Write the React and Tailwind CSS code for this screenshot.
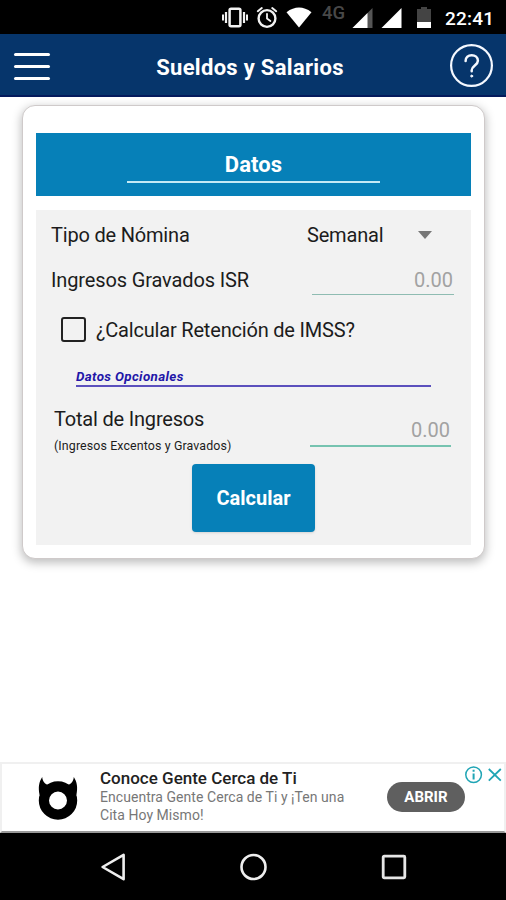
import React, { useState } from "react";

const StatusBar = () => (
  <div className="flex h-[34px] items-center bg-black pl-[221px] text-white">
    <svg className="h-[34px] w-[28px]" viewBox="0 0 28 34" fill="none" stroke="#f2f2f2">
      <rect x="8.6" y="8.8" width="10.8" height="17.4" rx="1.5" strokeWidth="2.5" />
      <path d="M5 12v11M23 12v11" strokeWidth="2.2" />
      <path d="M2 14.5v6M26 14.5v6" strokeWidth="2" />
    </svg>
    <svg className="ml-[7px] h-[34px] w-[22px]" viewBox="0 0 22 34" fill="none" stroke="#f2f2f2" strokeLinecap="round">
      <circle cx="11" cy="18.5" r="8.4" strokeWidth="2.4" />
      <path d="M1.8 11.2l4-3.2M20.2 11.2l-4-3.2" strokeWidth="2" />
      <path d="M11 13.8v4.8l3.4 2.4" strokeWidth="1.8" />
    </svg>
    <svg className="ml-[8px] h-[34px] w-[26px]" viewBox="0 0 26 34" fill="#fff">
      <path d="M0.5 12.2Q13 3 25.5 12.2L13 27.5z" />
    </svg>
    <span className="mb-[8px] ml-[10px] w-[25px] text-[18.5px] leading-none font-medium text-[#484848]">4G</span>
    <svg className="ml-[5px] h-[34px] w-[21px]" viewBox="0 0 21 34">
      <path d="M0.5 28L20.5 8v20z" fill="#555" />
      <path d="M0.5 28L15.5 13v15z" fill="#fff" />
    </svg>
    <svg className="ml-[8px] h-[34px] w-[21px]" viewBox="0 0 21 34" fill="#fff">
      <path d="M0.5 28L20.5 8v20z" />
    </svg>
    <svg className="ml-[15px] h-[34px] w-[14px]" viewBox="0 0 14 34">
      <path d="M0 9h4V7h6v2h4v13H0z" fill="#444" />
      <path d="M0 22h14v6H0z" fill="#fff" />
    </svg>
    <span className="mt-[2px] ml-[14px] text-[19px] leading-none font-medium tracking-[0.2px]">22:41</span>
  </div>
);

const Header = () => (
  <header className="flex h-[63px] items-center border-b-2 border-[#041a5c] bg-[#06356b] pt-[3px] pl-[14px] text-white">
    <button className="flex w-[36px] flex-col gap-[9px]" aria-label="Menú">
      <span className="h-[3px] rounded-full bg-white" />
      <span className="h-[3px] rounded-full bg-white" />
      <span className="h-[3px] rounded-full bg-white" />
    </button>
    <h1 className="mt-[3px] w-[400px] text-center text-[22px] leading-none font-bold tracking-[0.3px] whitespace-nowrap">
      Sueldos y Salarios
    </h1>
    <button aria-label="Ayuda">
      <svg className="h-[44px] w-[44px]" viewBox="0 0 44 44" fill="none" stroke="#f4f8ff" strokeLinecap="round">
        <circle cx="21.5" cy="21.5" r="20.4" strokeWidth="2.2" />
        <path d="M15.6 17c0-3.7 2.7-5.8 6.1-5.8s6.2 2.2 6.2 5.5c0 4.6-6.2 5-6.2 9.6v1" strokeWidth="2.5" />
        <circle cx="21.7" cy="32.1" r="1" fill="#f4f8ff" strokeWidth="1" />
      </svg>
    </button>
  </header>
);

const PayrollForm = () => {
  const [withholdImss, setWithholdImss] = useState(false);

  return (
    <div className="h-[335px] bg-[#f2f2f2] text-[20px] leading-[24px] tracking-[-0.19px] text-[#1c1c1c]">
      <div className="flex items-center pt-[13px] pl-[15px]">
        <span className="w-[256px] whitespace-nowrap">Tipo de Nómina</span>
        <span className="w-[111px]">Semanal</span>
        <svg className="h-[8px] w-[14px]" viewBox="0 0 14 8" fill="#777">
          <path d="M0 0h14L7 8z" />
        </svg>
      </div>

      <div className="mt-[21px] flex items-start pl-[15px]">
        <span className="w-[261px] tracking-[-0.13px] whitespace-nowrap">Ingresos Gravados ISR</span>
        <div className="h-[27px] w-[142px] border-b border-[#8fbcb2] pr-px text-right tracking-normal text-[#a2a2a2]">0.00</div>
      </div>

      <label className="mt-[22px] flex items-center pl-[25px]">
        <input
          type="checkbox"
          checked={withholdImss}
          onChange={() => setWithholdImss(!withholdImss)}
          className="h-[25px] w-[25px] appearance-none rounded-[3px] border-2 border-[#222] checked:bg-[#0680b8]"
        />
        <span className="ml-[10px] whitespace-nowrap">¿Calcular Retención de IMSS?</span>
      </label>

      <div className="mt-[27px] ml-[40px] h-[18px] w-[355px] border-b-2 border-[#5b50bd] text-[13.4px] leading-[16px] font-bold tracking-[0.35px] text-[#2216a8] italic">
        Datos Opcionales
      </div>

      <div className="mt-[20px] flex items-start pl-[18px]">
        <div className="w-[256px] whitespace-nowrap">
          <div>Total de Ingresos</div>
          <div className="mt-[7px] text-[12.4px] leading-[16px] tracking-[0.12px]">(Ingresos Excentos y Gravados)</div>
        </div>
        <div className="mt-[11px] h-[29px] w-[141px] border-b-2 border-[#76c3b0] pr-px text-right tracking-normal text-[#a2a2a2]">0.00</div>
      </div>

      <button className="mx-auto mt-[10px] block h-[68px] w-[123px] rounded-[4px] bg-[#0680b8] text-[20px] font-bold tracking-normal text-white shadow-sm">
        Calcular
      </button>
    </div>
  );
};

const AdBanner = () => (
  <div className="relative flex h-[71px] border-2 border-[#f0f0f0] border-b-[#999] bg-white">
    <svg className="mt-[13px] ml-[36px] h-[43px] w-[40px]" viewBox="0 0 40 43">
      <path d="M4.2 0C1 5 0 10 1.6 18L14 8.5C8 9 4.5 5 4.2 0zM35.8 0C39 5 40 10 38.4 18L26 8.5C32 9 35.5 5 35.8 0z" />
      <circle cx="20" cy="23.5" r="14.1" fill="none" stroke="#000" strokeWidth="10.2" />
    </svg>
    <div className="ml-[22px] pt-[5px] whitespace-nowrap">
      <div className="text-[17px] leading-[18px] font-medium text-[#222]">Conoce Gente Cerca de Ti</div>
      <div className="mt-px text-[14px] leading-[18px] tracking-[0.05px] text-[#777]">
        Encuentra Gente Cerca de Ti y ¡Ten una
        <br />
        Cita Hoy Mismo!
      </div>
    </div>
    <button className="absolute top-[18px] left-[385px] h-[30px] w-[78px] rounded-full bg-[#5f5f5f] text-[15px] leading-none font-bold text-white">
      ABRIR
    </button>
    <svg className="absolute top-px right-0 h-[20px] w-[40px]" viewBox="0 0 40 20" fill="none" stroke="#20a5b5" strokeWidth="1.8">
      <circle cx="9.6" cy="9.8" r="7.8" strokeWidth="1.5" />
      <path d="M9.6 8.6v6M9.6 4.8v2" strokeWidth="2" />
      <path d="M24.8 4l12 11.6M36.8 4l-12 11.6" />
    </svg>
  </div>
);

const NavBar = () => (
  <nav className="flex h-[67px] items-center justify-between bg-black pr-[99px] pl-[100px]">
    <svg className="h-[28px] w-[26px]" viewBox="0 0 26 28" fill="none" stroke="#eee" strokeWidth="2.6" strokeLinejoin="round">
      <path d="M23.6 1.8v24.4L2.6 14z" />
    </svg>
    <svg className="h-[28px] w-[28px]" viewBox="0 0 28 28" fill="none" stroke="#eee" strokeWidth="2.6">
      <circle cx="13.5" cy="14" r="12" />
    </svg>
    <svg className="h-[26px] w-[26px]" viewBox="0 0 26 26" fill="none" stroke="#e6e6e6" strokeWidth="2.8">
      <rect x="2.2" y="2.2" width="21.6" height="21.6" rx="1" />
    </svg>
  </nav>
);

const App = () => (
  <div className="flex h-[900px] w-[506px] flex-col overflow-hidden bg-white font-['Roboto',sans-serif]">
    <StatusBar />
    <Header />
    <main className="flex-1 pt-[8px] pr-[21px] pl-[22px]">
      <div className="h-[454px] rounded-[13px] border border-[#cfcaca] bg-white px-[13px] pt-[27px] shadow-[0_3px_10px_1px_rgba(0,0,0,0.25)]">
        <div className="flex h-[63px] justify-center bg-[#0680b8]">
          <div className="h-[50px] w-[253px] border-b-2 border-[#c5eaf5] pt-[20px] text-center text-[22px] leading-[24px] font-bold tracking-[0.1px] text-white">
            Datos
          </div>
        </div>
        <div className="mt-[14px]">
          <PayrollForm />
        </div>
      </div>
    </main>
    <AdBanner />
    <NavBar />
  </div>
);

export default App;
